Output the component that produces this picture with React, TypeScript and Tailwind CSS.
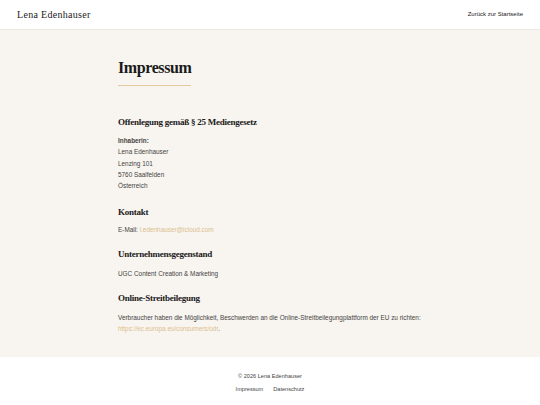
export default function App() {
  const serif = { fontFamily: '"Liberation Serif", "Times New Roman", serif' };
  return (
    <div className="flex min-h-[405px] flex-col bg-white text-[#333]" style={{ fontFamily: '"Liberation Sans", Arial, sans-serif' }}>
      <header className="flex h-[30px] items-center justify-between border-b border-[#ece8e2] bg-white px-[17px]">
        <span className="text-[10px] tracking-[0.3px] text-[#222]" style={serif}>Lena Edenhauser</span>
        <a className="text-[6px] text-[#222]">Zurück zur Startseite</a>
      </header>

      <main className="bg-[#f8f4ef] pb-[23px] pt-[27px]">
        <div className="ml-[118px] w-[304px]">
          <h1 className="text-[16px] font-bold leading-[22px] tracking-[-0.4px] text-[#1a1a1a]" style={serif}>Impressum</h1>
          <div className="mt-[6px] h-px w-[73px] bg-[#e3c9a2]" />

          <section className="mt-[29px]">
            <h2 className="text-[9px] font-bold leading-[14px] tracking-[-0.25px] text-[#1a1a1a]" style={serif}>Offenlegung gemäß § 25 Mediengesetz</h2>
            <div className="mt-[6px] text-[6.4px] leading-[11.3px] text-[#444]">
              <p className="font-bold">Inhaberin:</p>
              <p>Lena Edenhauser</p>
              <p>Lenzing 101</p>
              <p>5760 Saalfelden</p>
              <p>Österreich</p>
            </div>
          </section>

          <section className="mt-[14px]">
            <h2 className="text-[9px] font-bold leading-[14px] tracking-[-0.25px] text-[#1a1a1a]" style={serif}>Kontakt</h2>
            <p className="mt-[5px] text-[6.4px] leading-[11px] text-[#444]">
              E-Mail: <a className="text-[#dcbf8f]">l.edenhauser@icloud.com</a>
            </p>
          </section>

          <section className="mt-[12px]">
            <h2 className="text-[9px] font-bold leading-[14px] tracking-[-0.25px] text-[#1a1a1a]" style={serif}>Unternehmensgegenstand</h2>
            <p className="mt-[7px] text-[6.4px] leading-[11px] text-[#444]">UGC Content Creation &amp; Marketing</p>
          </section>

          <section className="mt-[12px]">
            <h2 className="text-[9px] font-bold leading-[14px] tracking-[-0.25px] text-[#1a1a1a]" style={serif}>Online-Streitbeilegung</h2>
            <p className="mt-[7px] w-[310px] text-[6.4px] leading-[11px] text-[#444]">
              Verbraucher haben die Möglichkeit, Beschwerden an die Online-Streitbeilegungplattform der EU zu richten:{' '}
              <a className="text-[#dcbf8f]">https://ec.europa.eu/consumers/odr</a>.
            </p>
          </section>
        </div>
      </main>

      <footer className="flex flex-col items-center bg-white pt-[15px] pb-[10px] text-[5.6px] text-[#444]">
        <p className="leading-[9px]">© 2026 Lena Edenhauser</p>
        <div className="mt-[4px] flex gap-[10px] leading-[9px]">
          <a>Impressum</a>
          <a>Datenschutz</a>
        </div>
      </footer>
    </div>
  );
}
